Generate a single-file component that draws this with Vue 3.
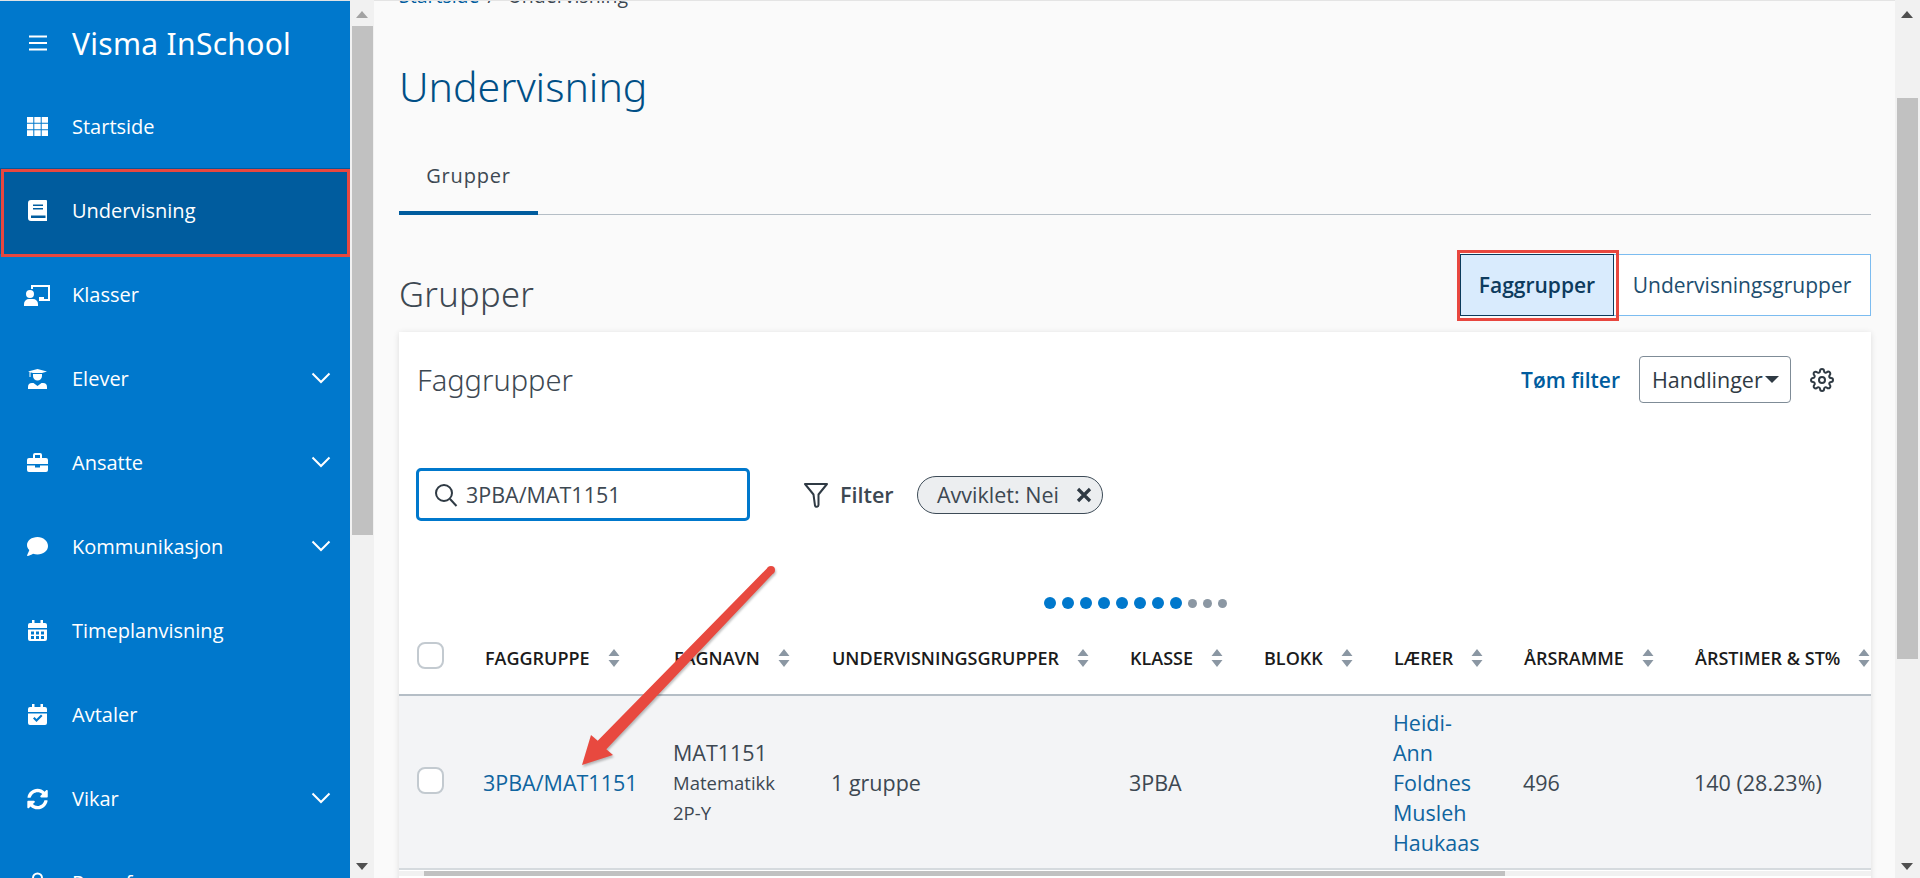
<script setup>
const nav = [
  { label: 'Startside', d: 'M3 3h6.3v5.7H3ZM10.3 3h6.4v5.7h-6.4ZM17.7 3H24v5.7h-6.3ZM3 9.7h6.3v5.6H3ZM10.3 9.7h6.4v5.6h-6.4ZM17.7 9.7H24v5.6h-6.3ZM3 16.3h6.3V22H3ZM10.3 16.3h6.4V22h-6.4ZM17.7 16.3H24V22h-6.3Z' },
  { label: 'Undervisning', active: true, d: 'M7 2h15a1 1 0 0 1 1 1v20H7a3 3 0 0 1-3-3V5a3 3 0 0 1 3-3ZM9 6.5h10V8H9ZM9 10h10v1.5H9ZM7 17.5h14.5V20H7Z' },
  { label: 'Klasser', d: 'M2 12a4 4 0 1 1 8 0 4 4 0 0 1-8 0ZM0 24v-2a5 5 0 0 1 5-5h4a5 5 0 0 1 5 5v2ZM7 3h19v16H15v-4h5v2h4V5H9v2H7Z' },
  { label: 'Elever', chevron: true, d: 'M4 5.5 13.5 3 23 5.5 18 7H9ZM5.5 6h1v5h-1ZM9 8h9v2a4.5 4.5 0 0 1-9 0ZM4 23v-2a4 4 0 0 1 4-4h1.5l4 3 4-3H19a4 4 0 0 1 4 4v2Z' },
  { label: 'Ansatte', chevron: true, d: 'M5 8h17a2 2 0 0 1 2 2v4H3v-4a2 2 0 0 1 2-2ZM3 15.5h8v2h5v-2h8V20a2 2 0 0 1-2 2H5a2 2 0 0 1-2-2ZM9 8V5a2 2 0 0 1 2-2h5a2 2 0 0 1 2 2v3h-2V5h-5v3Z' },
  { label: 'Kommunikasjon', chevron: true, d: 'M13.5 3C7.7 3 3 6.6 3 11c0 1.9.9 3.7 2.3 5.1C4.8 18 3.3 20 3 22c2.6-.2 4.7-1.3 6-2.2 1.4.5 2.9.7 4.5.7 5.8 0 10.5-3.6 10.5-8.5S19.3 3 13.5 3Z' },
  { label: 'Timeplanvisning', d: 'M8 2h2.5v3h6V2H19v3h2a2 2 0 0 1 2 2v3H4V7a2 2 0 0 1 2-2h2ZM4 11.5h19V21a2 2 0 0 1-2 2H6a2 2 0 0 1-2-2ZM7 13.5h3v3H7ZM12 13.5h3v3h-3ZM17 13.5h3v3h-3ZM7 18h3v3H7ZM12 18h3v3h-3ZM17 18h3v3h-3Z' },
  { label: 'Avtaler', d: 'M8 2h2.5v3h6V2H19v3h2a2 2 0 0 1 2 2v3H4V7a2 2 0 0 1 2-2h2ZM4 11.5h19V21a2 2 0 0 1-2 2H6a2 2 0 0 1-2-2ZM9 16.5 10.5 15l2 2 4.5-4.5 1.5 1.5-6 6Z' },
  { label: 'Vikar', chevron: true, tf: 'translate(3 2.5) scale(.0412)', d: 'M370.72 133.28C339.458 104.008 298.888 87.962 255.848 88c-77.458.068-144.328 53.178-162.791 126.85-1.344 5.363-6.122 9.15-11.651 9.15H24.103c-7.498 0-13.194-6.807-11.807-14.176C33.933 94.924 134.813 8 256 8c66.448 0 126.791 26.136 171.315 68.685L463.03 40.97C478.149 25.851 504 36.559 504 57.941V192c0 13.255-10.745 24-24 24H345.941c-21.382 0-32.09-25.851-16.971-40.971l41.75-41.749zM32 296h134.059c21.382 0 32.09 25.851 16.971 40.971l-41.75 41.75c31.262 29.273 71.835 45.319 114.876 45.28 77.418-.07 144.315-53.144 162.787-126.849 1.344-5.363 6.122-9.15 11.651-9.15h57.304c7.498 0 13.194 6.807 11.807 14.176C478.067 417.076 377.187 504 256 504c-66.448 0-126.791-26.136-171.315-68.685L48.97 471.03C33.851 486.149 8 475.441 8 454.059V320c0-13.255 10.745-24 24-24z' },
  { label: 'Prøveform', d: 'M8 8a5.5 5.5 0 1 1 11 0 5.5 5.5 0 0 1-11 0Zm2 0a3.5 3.5 0 1 0 7 0 3.5 3.5 0 0 0-7 0Z' },
]
const columns = [
  { label: 'Faggruppe' }, { label: 'Fagnavn' }, { label: 'Undervisningsgrupper' }, { label: 'Klasse' },
  { label: 'Blokk' }, { label: 'Lærer' }, { label: 'Årsramme' }, { label: 'Årstimer & ST%' },
]
const colWidths = [84, 189, 158, 298, 134, 130, 130, 171, 178]
const blueDots = 8
const greyDots = 3
</script>

<template>
  <div class="app">
    <aside class="sidebar">
      <div class="brand">
        <svg class="burger" width="20" height="16" viewBox="0 0 20 16"><path d="M1 1.5h18M1 8h18M1 14.5h18" stroke="#fff" stroke-width="2" fill="none" /></svg>
        <span class="brand-name">Visma InSchool</span>
      </div>
      <a v-for="item in nav" :key="item.label" class="nav-item" :class="{ active: item.active }">
        <svg class="nav-icon" width="27" height="24" viewBox="0 0 27 24">
          <path :d="item.d" :transform="item.tf" fill="#fff" fill-rule="evenodd" />
        </svg>
        <span class="nav-label">{{ item.label }}</span>
        <svg v-if="item.chevron" class="chev" width="20" height="12" viewBox="0 0 20 12"><path d="M1.5 1.5 10 10l8.500-8.500" stroke="#fff" stroke-width="2" fill="none" /></svg>
        <span v-if="item.active" class="mark mark-nav"></span>
      </a>
    </aside>

    <div class="vbar">
      <svg class="arrow-up" width="12" height="7" viewBox="0 0 12 7"><path d="M6 0l6 7H0Z" fill="#a3a3a3" /></svg>
      <div class="vthumb vthumb-left"></div>
      <svg class="arrow-down" width="12" height="7" viewBox="0 0 12 7"><path d="M0 0h12L6 7Z" fill="#505050" /></svg>
    </div>

    <main class="main">
      <div class="crumbs"><a class="crumb-link">Startside</a><span class="crumb-sep">/</span><span>Undervisning</span></div>
      <h1 class="title">Undervisning</h1>
      <div class="tabs"><a class="tab">Grupper</a></div>

      <div class="section-head">
        <h2 class="section-title">Grupper</h2>
        <div class="btn-group">
          <button class="seg seg-on">Faggrupper<span class="mark mark-btn"></span></button>
          <button class="seg">Undervisningsgrupper</button>
        </div>
      </div>

      <section class="card">
        <div class="card-head">
          <h3 class="card-title">Faggrupper</h3>
          <div class="card-actions">
            <a class="clear">Tøm filter</a>
            <button class="actions">Handlinger<span class="caret"></span></button>
            <svg class="gear" width="24" height="24" viewBox="0 0 24 24" fill="none" stroke="#2f3a44" stroke-width="2">
              <path d="M12 15a3 3 0 1 0 0-6 3 3 0 0 0 0 6z" />
              <path d="M19.4 15a1.65 1.65 0 0 0 .33 1.82l.06.06a2 2 0 0 1 0 2.83 2 2 0 0 1-2.83 0l-.06-.06a1.65 1.65 0 0 0-1.82-.33 1.65 1.65 0 0 0-1 1.51V21a2 2 0 0 1-2 2 2 2 0 0 1-2-2v-.09A1.65 1.65 0 0 0 9 19.4a1.65 1.65 0 0 0-1.82.33l-.06.06a2 2 0 0 1-2.83 0 2 2 0 0 1 0-2.83l.06-.06a1.65 1.65 0 0 0 .33-1.82 1.65 1.65 0 0 0-1.51-1H3a2 2 0 0 1-2-2 2 2 0 0 1 2-2h.09A1.65 1.65 0 0 0 4.600 9a1.65 1.65 0 0 0-.33-1.82l-.06-.06a2 2 0 0 1 0-2.83 2 2 0 0 1 2.830 0l.06.06a1.65 1.65 0 0 0 1.82.33H9a1.65 1.65 0 0 0 1-1.51V3a2 2 0 0 1 2-2 2 2 0 0 1 2 2v.09a1.65 1.65 0 0 0 1 1.51 1.65 1.65 0 0 0 1.82-.33l.06-.06a2 2 0 0 1 2.83 0 2 2 0 0 1 0 2.83l-.06.06a1.65 1.65 0 0 0-.33 1.82V9a1.65 1.65 0 0 0 1.51 1H21a2 2 0 0 1 2 2 2 2 0 0 1-2 2h-.09a1.65 1.65 0 0 0-1.51 1z" />
            </svg>
          </div>
        </div>

        <div class="filters">
          <div class="search">
            <svg width="24" height="24" viewBox="0 0 24 24" fill="none" stroke="#2f3a44" stroke-width="2"><circle cx="10" cy="10" r="8" /><path d="M16 16l6.500 7" /></svg>
            <span class="search-text">3PBA/MAT1151</span>
          </div>
          <svg class="funnel" width="26" height="26" viewBox="0 0 26 26" fill="none" stroke="#2f3a44" stroke-width="2" stroke-linejoin="round"><path d="M2 2h22l-8.500 10.500V23a1.800 1.800 0 0 1-3.500.6L10.500 12.500Z" /></svg>
          <span class="filter-label">Filter</span>
          <span class="chip">Avviklet: Nei<svg width="16" height="16" viewBox="0 0 16 16"><path d="M2 2l12 12M14 2 2 14" stroke="#2f3a44" stroke-width="3.200" /></svg></span>
        </div>

        <div class="dots">
          <i v-for="n in blueDots" :key="'b' + n" class="dot"></i>
          <i v-for="n in greyDots" :key="'g' + n" class="dot dot-grey"></i>
        </div>

        <table class="grid">
          <colgroup><col v-for="(w, i) in colWidths" :key="i" :style="{ width: w + 'px' }" /></colgroup>
          <thead>
            <tr>
              <th class="check-cell"><span class="check check-head"></span></th>
              <th v-for="c in columns" :key="c.label">
                <span class="th-in">{{ c.label }}<svg class="sort" width="12" height="18" viewBox="0 0 12 18"><path d="M6 0l5.500 7H.5ZM.5 11h11L6 18Z" fill="#8b97a3" /></svg></span>
              </th>
              <th></th>
            </tr>
          </thead>
          <tbody>
            <tr>
              <td class="check-cell"><span class="check check-row"></span></td>
              <td><a class="link">3PBA/MAT1151</a></td>
              <td>MAT1151<div class="sub">Matematikk</div><div class="sub">2P-Y</div></td>
              <td>1 gruppe</td>
              <td>3PBA</td>
              <td></td>
              <td><a class="link">Heidi-<br />Ann<br />Foldnes<br />Musleh<br />Haukaas</a></td>
              <td>496</td>
              <td>140 (28.23%)</td>
              <td></td>
            </tr>
          </tbody>
        </table>
        <div class="hbar"><div class="hthumb"></div></div>
      </section>
    </main>

    <div class="vbar vbar-right">
      <svg class="arrow-up" width="12" height="7" viewBox="0 0 12 7"><path d="M6 0l6 7H0Z" fill="#505050" /></svg>
      <div class="vthumb vthumb-right"></div>
      <svg class="arrow-down" width="12" height="7" viewBox="0 0 12 7"><path d="M0 0h12L6 7Z" fill="#505050" /></svg>
    </div>

    <svg class="red-arrow" width="1920" height="878" viewBox="0 0 1920 878">
      <g fill="#e8493f" style="filter: drop-shadow(1px 2px 1px rgba(0,0,0,.25))">
        <circle cx="771" cy="570" r="4" />
        <path d="M773.900 572.800 768.100 567.200 597.700 740.800 591 735 582 765 613 755 606.300 749.200Z" />
      </g>
    </svg>
  </div>
</template>

<style>
html, body { margin: 0; overflow: hidden; }
</style>

<style scoped>
.app {
  position: relative;
  display: flex;
  height: 878px;
  overflow: hidden;
  background: #fafafa;
  font-family: "Open Sans", "Noto Sans", sans-serif;
  font-size: 21.5px;
  color: #3d4852;
}
.sidebar {
  width: 350px;
  flex: none;
  background: #0078cc;
  color: #fff;
  overflow: hidden;
  padding-top: 1px;
  box-sizing: border-box;
  border-top: 1px solid #dfe3e6;
}
.brand {
  display: flex;
  align-items: center;
  height: 82px;
  padding-left: 28px;
}
.burger { margin-right: 24px; }
.brand-name { font-family: "Noto Sans", sans-serif; font-size: 30px; letter-spacing: .3px; }
.nav-item {
  position: relative;
  display: flex;
  align-items: center;
  height: 84px;
}
.nav-item.active { background: #005c9e; box-shadow: 0 2px 0 #005c9e; }
.nav-icon { margin-left: 24px; margin-right: 21px; flex: none; }
.nav-label { font-size: 20px; flex: 1; }
.chev { margin-right: 19px; }
.mark {
  position: absolute;
  border: 3px solid #e8473f;
  box-sizing: border-box;
  pointer-events: none;
}
.mark-nav { left: 1px; right: 0; top: 1px; bottom: -5px; }

.vbar {
  position: relative;
  flex: none;
  width: 24px;
  background: #f1f1f1;
}
.vbar-right { width: 25px; }
.vthumb { position: absolute; background: #c1c1c1; }
.vthumb-left { left: 2px; right: 1px; top: 26px; height: 509px; }
.vthumb-right { left: 2px; right: 2px; top: 98px; height: 561px; }
.arrow-up { position: absolute; left: 6px; top: 11px; }
.arrow-down { position: absolute; left: 6px; top: 863px; }

.main {
  flex: 1;
  min-width: 0;
  padding: 0 24px 0 25px;
  border-top: 1px solid #e4e4e4;
  box-sizing: border-box;
  overflow: hidden;
}
.crumbs {
  height: 24px;
  line-height: 24px;
  margin-top: -17px;
  font-size: 19.5px;
  color: #3d4852;
  white-space: nowrap;
}
.crumb-link { color: #005c9e; }
.crumb-sep { margin: 0 13px 0 8px; }
.title {
  margin: 48px 0 0;
  height: 60px;
  line-height: 60px;
  font-family: "Noto Sans", sans-serif;
  font-weight: 300;
  font-size: 41px;
  color: #004f86;
}
.tabs {
  display: flex;
  height: 64px;
  margin-top: 35px;
  box-sizing: border-box;
  border-bottom: 1px solid #b5bec6;
}
.tab {
  width: 139px;
  box-sizing: border-box;
  padding-top: 11px;
  line-height: 27px;
  text-align: center;
  font-size: 20px;
  letter-spacing: .8px;
  border-bottom: 4px solid #005c9e;
  height: 64px;
}
.section-head {
  display: flex;
  justify-content: space-between;
  align-items: flex-end;
  height: 62px;
  margin-top: 39px;
}
.section-title {
  margin: 0;
  font-family: "Noto Sans", sans-serif;
  font-weight: 300;
  font-size: 34.5px;
  letter-spacing: .3px;
  line-height: 44px;
  color: #3d4852;
}
.btn-group { display: flex; height: 62px; }
.seg {
  position: relative;
  width: 257px;
  height: 62px;
  padding: 0;
  box-sizing: border-box;
  background: #fff;
  border: 1px solid #7cbcf0;
  border-left: none;
  font-family: inherit;
  font-size: 21px;
  color: #1d4e6f;
}
.seg-on {
  width: 154px;
  background: #d9ebfd;
  border: 1px solid #0b3a5c;
  color: #0d3b5e;
  font-weight: 600;
}
.mark-btn { left: -4px; right: -6px; top: -5px; bottom: -6px; z-index: 2; }

.card {
  position: relative;
  margin-top: 16px;
  height: 560px;
  background: #fff;
  box-shadow: 0 1px 6px rgba(0, 0, 0, .12);
}
.card-head {
  display: flex;
  justify-content: space-between;
  align-items: center;
  height: 47px;
  padding: 24px 37px 0 18px;
}
.card-title {
  margin: 0;
  font-family: "Noto Sans", sans-serif;
  font-weight: 300;
  font-size: 29px;
  color: #3d4852;
}
.card-actions { display: flex; align-items: center; }
.clear { color: #005c9e; font-weight: 600; margin-right: 19px; font-size: 21px; }
.actions {
  display: flex;
  align-items: center;
  width: 152px;
  height: 47px;
  padding: 0 0 0 12px;
  box-sizing: border-box;
  background: #fff;
  border: 1px solid #7f8c97;
  border-radius: 4px;
  font-family: inherit;
  font-size: 21.5px;
  color: #2f3a44;
}
.caret {
  width: 0;
  height: 0;
  border-left: 7px solid transparent;
  border-right: 7px solid transparent;
  border-top: 7px solid #2f3a44;
  margin-left: 2px;
}
.gear { margin-left: 19px; }
.filters {
  display: flex;
  align-items: center;
  height: 53px;
  margin-top: 65px;
  padding-left: 17px;
}
.search {
  display: flex;
  align-items: center;
  width: 334px;
  height: 53px;
  box-sizing: border-box;
  padding-left: 15px;
  border: 3px solid #0078cc;
  border-radius: 5px;
}
.search-text { margin-left: 8px; color: #3d4852; }
.funnel { margin-left: 53px; }
.filter-label { margin-left: 11px; font-weight: 600; width: 77px; }
.chip {
  display: flex;
  align-items: center;
  justify-content: space-between;
  width: 186px;
  height: 38px;
  box-sizing: border-box;
  padding: 0 10px 0 19px;
  background: #eceef0;
  border: 1px solid #3d4b57;
  border-radius: 19px;
}
.dots {
  display: flex;
  align-items: center;
  height: 12px;
  margin-top: 76px;
  padding-left: 645px;
}
.dot { width: 12px; height: 12px; margin-right: 6px; border-radius: 50%; background: #0078cc; flex: none; }
.dot-grey { width: 9px; height: 9px; background: #8b97a3; }
.grid {
  width: 1472px;
  margin-top: 13px;
  table-layout: fixed;
  border-collapse: collapse;
}
th {
  height: 73px;
  padding: 0 0 0 2px;
  box-sizing: border-box;
  border-bottom: 2px solid #b5bec6;
  text-align: left;
  font-size: 18px;
  font-weight: 600;
  color: #1b1b1b;
  text-transform: uppercase;
  white-space: nowrap;
}
.th-in { display: inline-flex; align-items: center; }
.sort { margin-left: 18px; flex: none; }
td {
  height: 174px;
  padding: 2px 0 0 0;
  box-sizing: border-box;
  background: #f3f4f6;
  border-bottom: 2px solid #d5dade;
  line-height: 30px;
}
td + td + td { padding-left: 1px; }
.check-cell { padding-left: 18px; padding-right: 0; }
th.check-cell { padding-left: 18px; }
.check {
  display: block;
  width: 27px;
  height: 27px;
  box-sizing: border-box;
  background: #fff;
  border: 2px solid #c3cad0;
  border-radius: 8px;
}
.check-head { margin-bottom: 6px; }
.check-row { margin-bottom: 6px; }
.sub { font-size: 18.5px; }
.link { color: #0f649f; }
.hbar { position: relative; height: 5px; margin-top: 1px; background: #f1f1f1; }
.hthumb { position: absolute; left: 25px; width: 1081px; top: 0; bottom: 0; background: #c1c1c1; }
.red-arrow { position: absolute; left: 0; top: 0; pointer-events: none; z-index: 5; }
</style>
